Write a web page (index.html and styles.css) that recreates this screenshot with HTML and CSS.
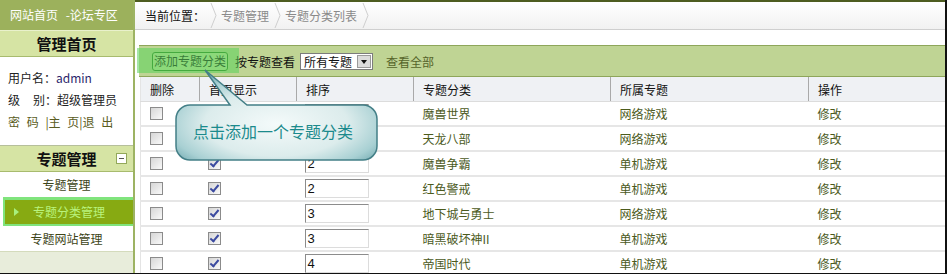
FILE: index.html
```html
<!DOCTYPE html>
<html lang="zh-CN">
<head>
  <meta charset="UTF-8" />
  <title>专题分类列表</title>
  <link rel="stylesheet" href="styles.css">
</head>
<body>
  <div class="frame">
    <div class="side">
      <div class="site">网站首页 -论坛专区</div>
      <div class="side-title">管理首页</div>
      <div class="user">
        <p>用户名：<span class="name">admin</span></p>
        <p>级<i class="sp"></i>别：超级管理员</p>
        <p class="links">密 码 |主 页|退 出</p>
      </div>
      <div class="side-title group">专题管理<span class="fold"></span></div>
      <ul class="menu">
        <li>专题管理</li>
        <li class="on">专题分类管理</li>
        <li>专题网站管理</li>
      </ul>
      <div class="side-foot"></div>
    </div>

    <div class="main">
      <div class="crumbs">
        <span class="here">当前位置：</span>
        <svg class="chev" width="7" height="27"><polyline points="1,1 6,13.5 1,26" fill="none" stroke="#cfcfcf" /></svg>
        <span>专题管理</span>
        <svg class="chev" width="7" height="27"><polyline points="1,1 6,13.5 1,26" fill="none" stroke="#cfcfcf" /></svg>
        <span>专题分类列表</span>
        <svg class="chev" width="7" height="27"><polyline points="1,1 6,13.5 1,26" fill="none" stroke="#cfcfcf" /></svg>
      </div>

      <div class="toolbar">
        <button class="add">添加专题分类</button>
        <span class="by">按专题查看</span>
        <span class="select">所有专题<span class="arrow"></span></span>
        <a class="all">查看全部</a>
      </div>

      <table class="list">
        <colgroup>
          <col style="width:59px"><col style="width:97px"><col style="width:117px">
          <col style="width:197px"><col style="width:198px"><col>
        </colgroup>
        <thead>
          <tr><th>删除</th><th>首页显示</th><th>排序</th><th>专题分类</th><th>所属专题</th><th>操作</th></tr>
        </thead>
        <tbody>
          <tr><td><span class="cb"></span></td><td><span class="cb on"></span></td><td><span class="num"></span></td><td>魔兽世界</td><td>网络游戏</td><td>修改</td></tr>
          <tr><td><span class="cb"></span></td><td><span class="cb on"></span></td><td><span class="num"></span></td><td>天龙八部</td><td>网络游戏</td><td>修改</td></tr>
          <tr><td><span class="cb"></span></td><td><span class="cb on"></span></td><td><span class="num">2</span></td><td>魔兽争霸</td><td>单机游戏</td><td>修改</td></tr>
          <tr><td><span class="cb"></span></td><td><span class="cb on"></span></td><td><span class="num">2</span></td><td>红色警戒</td><td>单机游戏</td><td>修改</td></tr>
          <tr><td><span class="cb"></span></td><td><span class="cb on"></span></td><td><span class="num">3</span></td><td>地下城与勇士</td><td>网络游戏</td><td>修改</td></tr>
          <tr><td><span class="cb"></span></td><td><span class="cb on"></span></td><td><span class="num">3</span></td><td>暗黑破坏神II</td><td>单机游戏</td><td>修改</td></tr>
          <tr><td><span class="cb"></span></td><td><span class="cb on"></span></td><td><span class="num">4</span></td><td>帝国时代</td><td>单机游戏</td><td>修改</td></tr>
        </tbody>
      </table>

      <!-- guide overlay -->
      <div class="spot"></div>
      <svg class="tip" width="204" height="94" viewBox="0 0 204 94">
        <defs>
          <radialGradient id="glass" cx="50%" cy="60%" r="65%">
            <stop offset="0%" stop-color="#f4fafa" />
            <stop offset="55%" stop-color="#dcecec" />
            <stop offset="82%" stop-color="#a8d0d3" />
            <stop offset="100%" stop-color="#6ea7ae" />
          </radialGradient>
        </defs>
        <path d="M15,37 H55 L30,2 L72,37 H188 A14,14 0 0 1 202,51 V78 A14,14 0 0 1 188,92 H15 A14,14 0 0 1 1,78 V51 A14,14 0 0 1 15,37 Z"
              fill="url(#glass)" stroke="#437f87" stroke-width="1.5" />
        <text x="98" y="70" text-anchor="middle">点击添加一个专题分类</text>
      </svg>
    </div>
  </div>
</body>
</html>
```

FILE: styles.css
```css
body {
  margin: 0;
  font-family: "Noto Sans CJK SC", "Liberation Sans", sans-serif;
  font-size: 12px;
  color: #222;
  background: #fff;
}

.frame {
  display: flex;
  width: 945px;
  height: 273px;
  border-right: 2px solid #111;
  border-bottom: 1px solid #111;
  overflow: hidden;
}

/* sidebar */
.side {
  width: 133px;
  flex-shrink: 0;
  border-right: 2px solid #9db363;
  display: flex;
  flex-direction: column;
}

.site {
  height: 30px;
  line-height: 30px;
  padding-left: 10px;
  background: #9cb15c;
  color: #fff;
  word-spacing: 5px;
}

.side-title {
  position: relative;
  height: 25px;
  line-height: 25px;
  background: #d6e4a4;
  border-top: 1px solid #e9f1cc;
  border-bottom: 1px solid #a8bb6e;
  text-align: center;
  font-size: 15px;
  font-weight: bold;
  color: #111;
}

.side-title.group { border-top-color: #b6bf9b; }

.fold {
  position: absolute;
  right: 6px;
  top: 7px;
  width: 9px;
  height: 9px;
  border: 1px solid #93a85a;
  background: #fff;
}

.fold::after {
  content: "";
  position: absolute;
  left: 2px;
  top: 4px;
  width: 5px;
  height: 1px;
  background: #555;
}

.user {
  height: 88px;
  box-sizing: border-box;
  padding: 10px 0 0 8px;
}

.user p {
  margin: 0;
  line-height: 22px;
}

.user .name { color: #2b1f6b; }

.sp {
  display: inline-block;
  width: 13px;
}

.user .links {
  color: #5a5c22;
  word-spacing: 4px;
}

.menu {
  list-style: none;
  margin: 0;
  padding: 0;
}

.menu li {
  height: 25px;
  line-height: 25px;
  text-align: center;
  color: #3d4418;
}

.menu li.on {
  position: relative;
  height: 24px;
  line-height: 24px;
  margin-left: 3px;
  border: 2px solid #80e47c;
  border-top-width: 3px;
  border-right: 0;
  background: #87aa12;
  color: #b9f37e;
}

.menu li.on::before {
  content: "";
  position: absolute;
  left: 9px;
  top: 8px;
  border-left: 5px solid #a8f07c;
  border-top: 4px solid transparent;
  border-bottom: 4px solid transparent;
}

.side-foot {
  flex: 1;
  background: #e8eddb;
  border-top: 1px solid #d4dbbc;
}

/* main */
.main {
  position: relative;
  flex: 1;
  border-top: 2px solid #4d5c20;
}

.crumbs {
  display: flex;
  align-items: center;
  height: 27px;
  padding-left: 10px;
  border-bottom: 1px solid #cfcfcf;
  background: linear-gradient(#fff, #f1f1f1);
  color: #8a8a8a;
}

.crumbs .here { color: #111; }

.chev { margin: 0 4px 0 5px; }

.toolbar {
  display: flex;
  align-items: center;
  height: 30px;
  margin: 15px 0 0 4px;
  padding-left: 13px;
  background: #bfd494;
  border-top: 1px solid #8ea65a;
  border-bottom: 1px solid #8ea65a;
}

.add {
  height: 19px;
  padding: 0 1px;
  border: 1px solid #2e7a20;
  border-radius: 3px;
  background: #c9e3a3;
  font: inherit;
  line-height: 16px;
  color: #111;
}

.by { margin-left: 7px; color: #111; }

.select {
  display: flex;
  align-items: center;
  height: 15px;
  width: 68px;
  margin-left: 5px;
  padding-left: 3px;
  border: 1px solid #7c7c7c;
  background: #fff;
  color: #111;
  line-height: 15px;
}

.arrow {
  position: relative;
  width: 14px;
  height: 13px;
  margin-left: auto;
  margin-right: 1px;
  background: #dcdcdc;
  border: 1px solid #9a9a9a;
  box-sizing: border-box;
}

.arrow::after {
  content: "";
  position: absolute;
  left: 3px;
  top: 4px;
  border-top: 4px solid #111;
  border-left: 3.5px solid transparent;
  border-right: 3.5px solid transparent;
}

.all {
  margin-left: 13px;
  color: #56642a;
}

.list {
  margin-left: 5px;
  width: 805px;
  table-layout: fixed;
  border-collapse: collapse;
  border-left: 1px solid #e4e4e4;
}

.list th {
  height: 24px;
  padding: 0 0 0 9px;
  background: #eff1f4;
  border-left: 1px solid #a9a9a9;
  border-bottom: 1px solid #dcdcdc;
  text-align: left;
  font-weight: normal;
  color: #111;
}

.list th:first-child { border-left: 0; }

.list td {
  height: 23px;
  padding: 0 0 0 9px;
  border-bottom: 2px solid #e6e6e6;
  color: #4b5a1c;
}

.cb {
  display: block;
  position: relative;
  width: 11px;
  height: 11px;
  border: 1px solid #8b8b8b;
  background: linear-gradient(135deg, #d6d6d6, #f9f9f9);
}

.list td:nth-child(2) .cb { margin-left: -1px; }

.cb.on::after {
  content: "";
  position: absolute;
  left: 3px;
  top: 0;
  width: 3px;
  height: 7px;
  border-right: 2px solid #3b4aa0;
  border-bottom: 2px solid #3b4aa0;
  transform: rotate(40deg);
}

.num {
  display: block;
  width: 60px;
  height: 17px;
  margin-left: -1px;
  padding-left: 2px;
  border: 1px solid #dcdcdc;
  border-top-color: #8c8c8c;
  border-left-color: #8c8c8c;
  font-family: "Liberation Sans", sans-serif;
  font-size: 13px;
  line-height: 17px;
  color: #111;
}

/* guide overlay */
.spot {
  position: absolute;
  left: 2px;
  top: 46px;
  width: 102px;
  height: 25px;
  background: rgba(90, 210, 90, 0.55);
}

.tip {
  position: absolute;
  left: 40px;
  top: 66px;
}

.tip text {
  font-family: "Noto Sans CJK SC", sans-serif;
  font-size: 16px;
  fill: #1b8a8c;
}
```
